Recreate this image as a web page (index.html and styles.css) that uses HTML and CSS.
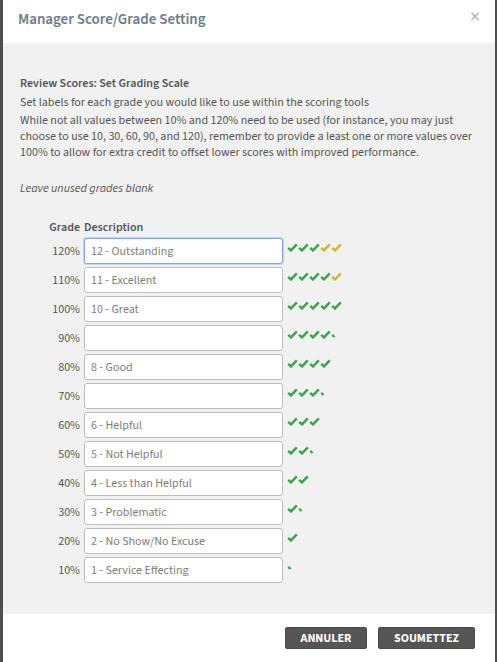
FILE: index.html
```html
<!DOCTYPE html>
<html lang="en">
<head>
	<meta charset="UTF-8">
	<title>Manager Score/Grade Setting</title>
	<link rel="stylesheet" href="styles.css">
</head>
<body>
	<svg width="0" height="0" class="defs">
		<symbol id="chk" viewBox="0 0 11 9"><path d="M1.2 4.8 L4 7.4 L9.8 1.4" fill="none" stroke-width="2.5" stroke-linejoin="miter"/></symbol>
		<symbol id="half" viewBox="0 0 11 9"><path d="M1.2 4.8 L3.6 7" fill="none" stroke-width="2.3"/></symbol>
	</svg>
	<div class="modal">
		<div class="modal-head">
			<h1>Manager Score/Grade Setting</h1>
			<span class="close">&times;</span>
		</div>
		<div class="modal-body">
			<div class="intro">
				<p class="lead">Review Scores: Set Grading Scale</p>
				<p>Set labels for each grade you would like to use within the scoring tools</p>
				<p>While not all values between 10% and 120% need to be used (for instance, you may just choose to use 10, 30, 60, 90, and 120), remember to provide a least one or more values over 100% to allow for extra credit to offset lower scores with improved performance.</p>
			</div>
			<p class="hint">Leave unused grades blank</p>

			<div class="grades">
				<div class="g-head">Grade</div><div class="g-head desc">Description</div><div></div>

				<div class="pct">120%</div>
				<input class="focus" type="text" placeholder="12 - Outstanding">
				<div class="stars"><svg class="ok"><use href="#chk"/></svg><svg class="ok"><use href="#chk"/></svg><svg class="ok"><use href="#chk"/></svg><svg class="gold"><use href="#chk"/></svg><svg class="gold"><use href="#chk"/></svg></div>

				<div class="pct">110%</div>
				<input type="text" placeholder="11 - Excellent">
				<div class="stars"><svg class="ok"><use href="#chk"/></svg><svg class="ok"><use href="#chk"/></svg><svg class="ok"><use href="#chk"/></svg><svg class="ok"><use href="#chk"/></svg><svg class="gold"><use href="#chk"/></svg></div>

				<div class="pct">100%</div>
				<input type="text" placeholder="10 - Great">
				<div class="stars"><svg class="ok"><use href="#chk"/></svg><svg class="ok"><use href="#chk"/></svg><svg class="ok"><use href="#chk"/></svg><svg class="ok"><use href="#chk"/></svg><svg class="ok"><use href="#chk"/></svg></div>

				<div class="pct">90%</div>
				<input type="text">
				<div class="stars"><svg class="ok"><use href="#chk"/></svg><svg class="ok"><use href="#chk"/></svg><svg class="ok"><use href="#chk"/></svg><svg class="ok"><use href="#chk"/></svg><svg class="ok"><use href="#half"/></svg></div>

				<div class="pct">80%</div>
				<input type="text" placeholder="8 - Good">
				<div class="stars"><svg class="ok"><use href="#chk"/></svg><svg class="ok"><use href="#chk"/></svg><svg class="ok"><use href="#chk"/></svg><svg class="ok"><use href="#chk"/></svg></div>

				<div class="pct">70%</div>
				<input type="text">
				<div class="stars"><svg class="ok"><use href="#chk"/></svg><svg class="ok"><use href="#chk"/></svg><svg class="ok"><use href="#chk"/></svg><svg class="ok"><use href="#half"/></svg></div>

				<div class="pct">60%</div>
				<input type="text" placeholder="6 - Helpful">
				<div class="stars"><svg class="ok"><use href="#chk"/></svg><svg class="ok"><use href="#chk"/></svg><svg class="ok"><use href="#chk"/></svg></div>

				<div class="pct">50%</div>
				<input type="text" placeholder="5 - Not Helpful">
				<div class="stars"><svg class="ok"><use href="#chk"/></svg><svg class="ok"><use href="#chk"/></svg><svg class="ok"><use href="#half"/></svg></div>

				<div class="pct">40%</div>
				<input type="text" placeholder="4 - Less than Helpful">
				<div class="stars"><svg class="ok"><use href="#chk"/></svg><svg class="ok"><use href="#chk"/></svg></div>

				<div class="pct">30%</div>
				<input type="text" placeholder="3 - Problematic">
				<div class="stars"><svg class="ok"><use href="#chk"/></svg><svg class="ok"><use href="#half"/></svg></div>

				<div class="pct">20%</div>
				<input type="text" placeholder="2 - No Show/No Excuse">
				<div class="stars"><svg class="ok"><use href="#chk"/></svg></div>

				<div class="pct">10%</div>
				<input type="text" placeholder="1 - Service Effecting">
				<div class="stars"><svg class="ok"><use href="#half"/></svg></div>
			</div>
		</div>
		<div class="modal-foot">
			<button class="btn">ANNULER</button>
			<button class="btn">SOUMETTEZ</button>
		</div>
	</div>
</body>
</html>
```

FILE: styles.css
```css
*{padding:0;margin:0;box-sizing:border-box;}
body{background:#4e4e4e;font-family:"Source Sans 3",Lato,"Liberation Sans",sans-serif;color:#555;}
.defs{position:absolute;}
.modal{margin:0 2px 0 3px;background:#fff;height:662px;display:flex;flex-direction:column;}

.modal-head{height:43px;display:flex;justify-content:space-between;align-items:flex-start;padding:9px 15px 0 15px;}
.modal-head h1{font-size:15px;font-weight:600;color:#6b7b8d;}
.close{font-size:20px;line-height:14px;color:#a9b0ba;margin-top:1px;}

.modal-body{flex:1;background:#f1f1f1;padding:33px 17px 0 17px;font-size:12px;}
.intro p{line-height:16px;margin-bottom:2px;}
.intro p.lead{font-weight:600;margin-bottom:3px;}
.hint{font-style:italic;margin-top:19px;}

.grades{display:grid;grid-template-columns:60px 199px auto;column-gap:4px;row-gap:3px;margin-top:22px;align-items:center;}
.g-head{font-weight:600;text-align:right;margin-bottom:-1px;}
.g-head.desc{text-align:left;}
.pct{text-align:right;}
.grades input{height:26px;border:1px solid #bcbcbc;border-radius:3px;background:#fff;padding:0 6px;font-family:inherit;font-size:12px;color:#555;outline:none;}
.grades input::placeholder{color:#7d7d7d;}
.grades input.focus{border:1px solid #7ea6e6;box-shadow:0 0 0 1px #c3d6f4;}
.stars{display:flex;align-self:start;margin-top:5px;}
.stars svg{width:11px;height:9px;}
.stars .ok{stroke:#3ea34c;}
.stars .gold{stroke:#d6b43a;}

.modal-foot{height:48px;display:flex;justify-content:flex-end;align-items:center;gap:11px;padding:0 20px 0 0;}
.btn{background:#555;color:#fff;border:1px solid #4a4a4a;border-radius:2px;height:22px;font-family:inherit;font-weight:bold;font-size:12px;}
.btn:first-child{width:82px;}
.btn:last-child{width:97px;}
```
